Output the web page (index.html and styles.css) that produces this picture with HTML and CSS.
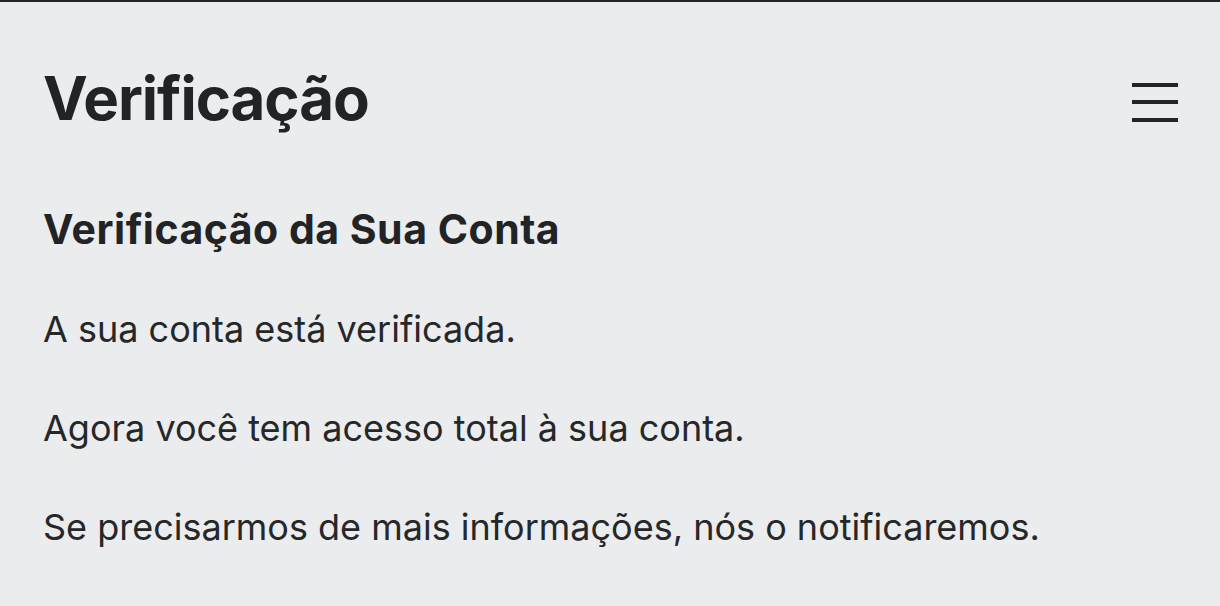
FILE: index.html
```html
<!DOCTYPE html>
<html lang="pt">
<head>
<meta charset="utf-8">
<title>Verificação</title>
<link rel="stylesheet" href="styles.css">
</head>
<body>
<div class="page">
  <header class="header">
    <h1 class="title">Verificação</h1>
    <button class="menu" aria-label="Menu">
      <svg width="46" height="39" viewBox="0 0 46 39">
        <rect x="0" y="0" width="46" height="4" fill="#232425"/>
        <rect x="0" y="17" width="46" height="4" fill="#232425"/>
        <rect x="0" y="35" width="46" height="4" fill="#232425"/>
      </svg>
    </button>
  </header>
  <main class="content">
    <h2 class="subtitle">Verificação da Sua Conta</h2>
    <p class="text">A sua conta está verificada.</p>
    <p class="text">Agora você tem acesso total à sua conta.</p>
    <p class="text">Se precisarmos de mais informações, nós o notificaremos.</p>
  </main>
</div>
</body>
</html>
```
FILE: styles.css
```css
html, body {
  margin: 0;
  padding: 0;
  background: #ebecee;
}
body {
  font-family: Inter, "Noto Sans", sans-serif;
  color: #222324;
  width: 1220px;
  height: 606px;
  overflow: hidden;
}
.page {
  border-top: 2px solid #1e2826;
  min-height: 604px;
}
.header {
  display: flex;
  align-items: flex-start;
  justify-content: space-between;
  padding: 66px 42px 0 43px;
}
.title {
  margin: 0;
  font-size: 60px;
  font-weight: 700;
  letter-spacing: -1px;
  line-height: 60px;
}
.menu {
  border: 0;
  background: none;
  padding: 0;
  margin-top: 15px;
  display: block;
}
.menu svg { display: block; }
.content {
  padding: 76px 44px 0 43px;
}
.subtitle {
  margin: 0 0 50px;
  font-size: 41px;
  font-weight: 700;
  letter-spacing: 0.5px;
  line-height: 50px;
}
.text {
  margin: 0 0 49px;
  font-size: 36px;
  font-weight: 400;
  line-height: 50px;
  color: #262729;
}
```
